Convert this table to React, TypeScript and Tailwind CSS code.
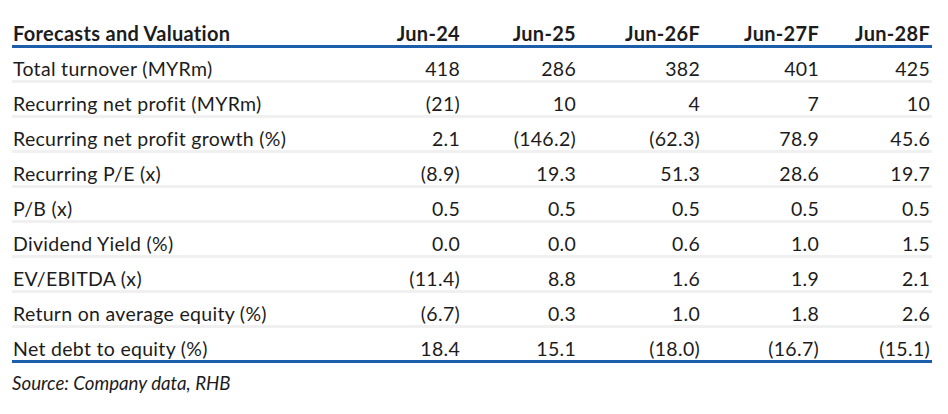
const rows: [string, string[]][] = [
  ["Total turnover (MYRm)", ["418", "286", "382", "401", "425"]],
  ["Recurring net profit (MYRm)", ["(21)", "10", "4", "7", "10"]],
  ["Recurring net profit growth (%)", ["2.1", "(146.2)", "(62.3)", "78.9", "45.6"]],
  ["Recurring P/E (x)", ["(8.9)", "19.3", "51.3", "28.6", "19.7"]],
  ["P/B (x)", ["0.5", "0.5", "0.5", "0.5", "0.5"]],
  ["Dividend Yield (%)", ["0.0", "0.0", "0.6", "1.0", "1.5"]],
  ["EV/EBITDA (x)", ["(11.4)", "8.8", "1.6", "1.9", "2.1"]],
  ["Return on average equity (%)", ["(6.7)", "0.3", "1.0", "1.8", "2.6"]],
  ["Net debt to equity (%)", ["18.4", "15.1", "(18.0)", "(16.7)", "(15.1)"]],
];

const years = ["Jun-24", "Jun-25", "Jun-26F", "Jun-27F", "Jun-28F"];

const grid = "grid grid-cols-[340px_108px_116px_124px_119px_111px]";

export default function App() {
  return (
    <div className="w-[948px] h-[414px] bg-white pt-[22px] pl-[12px] text-[#1c1c1c] font-['Lato','Liberation_Sans',sans-serif]">
      <div className="w-[920px]">
        {/* Header */}
        <div className={`${grid} h-[26px] border-b-[3px] border-[#1d5eab] text-[20px] font-bold leading-[22px] tracking-[0.3px]`}>
          <div className="pl-[1px]">Forecasts and Valuation</div>
          {years.map((y) => (
            <div key={y} className="text-right">{y}</div>
          ))}
        </div>

        {/* Body */}
        {rows.map(([label, vals], i) => (
          <div
            key={label}
            className={`${grid} h-[35px] pt-[8px] border-b-[3px] text-[19.5px] leading-[25px] tracking-[0.3px] ${
              i === rows.length - 1 ? "border-[#1d5eab]" : "border-[#f0f0f0]"
            }`}
          >
            <div className="pl-[1px]">{label}</div>
            {vals.map((v, j) => (
              <div key={j} className="text-right">{v}</div>
            ))}
          </div>
        ))}
      </div>

      <div className="mt-[7px] text-[18.7px] italic leading-[26px]">Source: Company data, RHB</div>
    </div>
  );
}
